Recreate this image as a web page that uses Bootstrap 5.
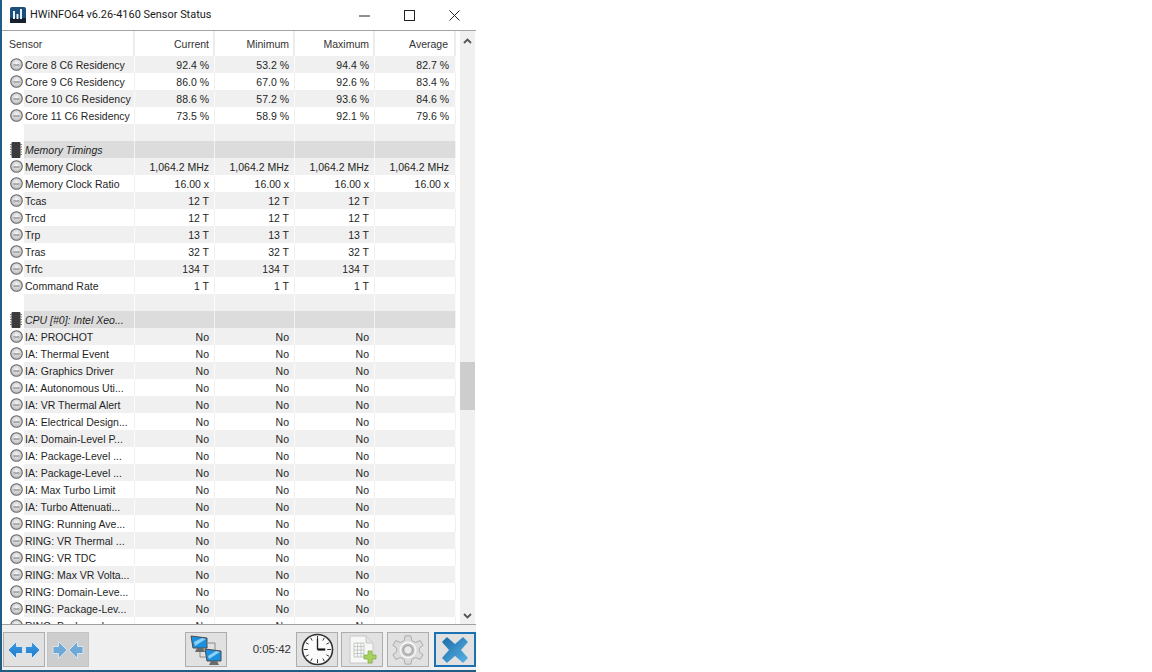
<!DOCTYPE html>
<html lang="en">
<head>
<meta charset="utf-8">
<title>HWiNFO64 v6.26-4160 Sensor Status</title>
<link href="https://cdn.jsdelivr.net/npm/bootstrap@5.3.0/dist/css/bootstrap.min.css" rel="stylesheet">
<style>
html,body{height:672px;margin:0;background:#fff;overflow:hidden}
body{font-family:"Liberation Sans",Arial,sans-serif;font-size:10.5px;color:#222}
.hw-window{width:476px;height:672px;border-left:2px solid #1f5d84;background:#fff}
.hw-title{height:30px;flex:none;padding-left:8px;margin-right:-1px;font-family:Roboto,"Liberation Sans",sans-serif;font-size:10.95px;color:#1a1a1a}
.hw-title-text{margin-left:4px;padding-top:1px}
.hw-ctl{width:45px;height:29px;padding:0;border:0;border-radius:0;background:transparent}
.hw-main{flex:1 1 0;min-height:0;border-top:1px solid #a4a4a4}
.hw-tablewrap{width:454px;flex:none;overflow:hidden}
.hw-table.table{width:454px;table-layout:fixed;margin:0;border-collapse:separate;border-spacing:0;--bs-table-bg:transparent;color:#222;font-size:10.5px}
.hw-table.table>:not(caption)>*>*{padding:0 5px 0 0;height:17px;line-height:16px;border:0;border-right:1px solid #f0f0f0;background:transparent;box-shadow:none;text-align:right;white-space:nowrap;color:#1f1f1f;vertical-align:middle}
.hw-table.table>thead>tr>th{height:25px;font-weight:400;border-right:2px solid #ececec;background:#fff;color:#333;padding-right:4px}
.hw-table.table>thead>tr>th.hw-c0{text-align:left;padding-left:7px}
.hw-table.table>tbody>tr>td.hw-ic{padding:0 0 0 8px;border:0;text-align:left;background:#fff!important;line-height:0}
.hw-table.table>tbody>tr>td.hw-nm{text-align:left;padding-left:1px;overflow:hidden}
.hw-table.table>tbody>tr:nth-child(odd)>td{background:#f0f0f0;border-right-color:#fbfbfb}
.hw-table.table>tbody>tr.hw-grp>td{background:#dcdcdc;border-right-color:#f2f2f2}
.hw-table.table>tbody>tr.hw-grp>td.hw-nm{font-style:italic}
.hw-table.table>:not(caption)>*>*.hw-last{padding-right:6px}
.hw-cic{width:13px;height:13px;display:block}
.hw-chip{width:12px;height:16px;display:block}
.hw-gap{width:4px;flex:none}
.hw-sb{width:15px;flex:none;background:#f0f0f0}
.hw-sbend{height:17px;flex:none;color:#606060}
.hw-sbtop{height:19px}
.hw-thumb{height:48px;flex:none;background:#cdcdcd;margin-top:312px}
.hw-foot{height:46px;flex:none;background:#f0f0f0;border-top:1px solid #a0a0a0;padding:7px 0 0 1px}
.hw-btn{width:42px;height:35px;padding:0;border:1px solid #adadad;border-radius:0;background:#e1e1e1;flex:none;line-height:0}
.hw-btn:disabled{opacity:1;background:#cdcdcd;border-color:#c4c4c4}
.hw-btn2{margin-left:2px}
.hw-btn3{margin-left:96px}
.hw-time{width:69px;flex:none;text-align:right;padding-right:5px;font-size:11.5px;line-height:34px;color:#333}
.hw-btn5{margin-left:3px}
.hw-btn6{margin-left:4px}
.hw-btn7{margin-left:5px;border:2px solid #1b72b4;width:42px}
.hw-strip{height:2px;flex:none;background:#1f5d84}
</style>
</head>
<body>
<svg width="0" height="0" class="position-absolute">
<defs>
<radialGradient id="gf" cx=".5" cy=".4" r=".6"><stop offset="0" stop-color="#f6f6f6"/><stop offset="1" stop-color="#b9b9b9"/></radialGradient>
<linearGradient id="gb" x1="0" y1="0" x2="0" y2="1"><stop offset="0" stop-color="#3f9ae2"/><stop offset="1" stop-color="#1f7ccc"/></linearGradient>
<linearGradient id="gx" x1="0" y1="0" x2="1" y2="1"><stop offset="0" stop-color="#1d6ea8"/><stop offset="1" stop-color="#57b0e4"/></linearGradient>
<symbol id="clk" viewBox="0 0 13 13"><circle cx="6.5" cy="6.5" r="5.8" fill="url(#gf)" stroke="#666" stroke-width="1.1"/><path d="M3.500 7h6" stroke="#666" stroke-width=".9"/></symbol>
<symbol id="chp" viewBox="0 0 12 16"><rect x="1.5" y="0" width="9" height="16" rx="1" fill="#3c3c3c"/><path d="M0 2.5h2M0 5h2M0 7.5h2M0 10h2M0 12.5h2M10 2.5h2M10 5h2M10 7.5h2M10 10h2M10 12.5h2" stroke="#777" stroke-width="1"/></symbol>
</defs>
</svg>
<div class="hw-window d-flex flex-column">
  <div class="hw-title d-flex align-items-center">
    <svg width="16" height="16" viewBox="0 0 16 16"><rect width="16" height="16" rx="2" fill="#1d4f78"/><rect y="11" width="16" height="5" fill="#15212c"/><path d="M3 4h2v8H3zM6.500 7h2v5h-2zM10 2h2v10h-2z" fill="#e8f2fa"/></svg>
    <span class="hw-title-text">HWiNFO64 v6.26-4160 Sensor Status</span>
    <div class="ms-auto d-flex">
      <button class="btn hw-ctl d-flex align-items-center justify-content-center" aria-label="Minimize"><svg width="11" height="11" viewBox="0 0 11 11"><path d="M0 6h11" stroke="#222"/></svg></button>
      <button class="btn hw-ctl d-flex align-items-center justify-content-center" aria-label="Maximize"><svg width="11" height="11" viewBox="0 0 11 11"><rect x=".5" y=".5" width="10" height="10" fill="none" stroke="#222"/></svg></button>
      <button class="btn hw-ctl d-flex align-items-center justify-content-center" aria-label="Close"><svg width="11" height="11" viewBox="0 0 11 11"><path d="M.5.5l10 10M10.500.5l-10 10" stroke="#222"/></svg></button>
    </div>
  </div>
  <div class="hw-main d-flex">
    <div class="hw-tablewrap">
      <table class="table hw-table">
        <colgroup><col style="width:22px"><col style="width:111px"><col style="width:80px"><col style="width:80px"><col style="width:80px"><col style="width:81px"></colgroup>
        <thead><tr><th class="hw-c0" colspan="2">Sensor</th><th>Current</th><th>Minimum</th><th>Maximum</th><th class="hw-last">Average</th></tr></thead>
        <tbody>
<tr><td class="hw-ic"><svg class="hw-cic"><use href="#clk"/></svg></td><td class="hw-nm">Core 8 C6 Residency</td><td>92.4 %</td><td>53.2 %</td><td>94.4 %</td><td class="hw-last">82.7 %</td></tr>
<tr><td class="hw-ic"><svg class="hw-cic"><use href="#clk"/></svg></td><td class="hw-nm">Core 9 C6 Residency</td><td>86.0 %</td><td>67.0 %</td><td>92.6 %</td><td class="hw-last">83.4 %</td></tr>
<tr><td class="hw-ic"><svg class="hw-cic"><use href="#clk"/></svg></td><td class="hw-nm">Core 10 C6 Residency</td><td>88.6 %</td><td>57.2 %</td><td>93.6 %</td><td class="hw-last">84.6 %</td></tr>
<tr><td class="hw-ic"><svg class="hw-cic"><use href="#clk"/></svg></td><td class="hw-nm">Core 11 C6 Residency</td><td>73.5 %</td><td>58.9 %</td><td>92.1 %</td><td class="hw-last">79.6 %</td></tr>
<tr><td class="hw-ic"></td><td class="hw-nm"></td><td></td><td></td><td></td><td></td></tr>
<tr class="hw-grp"><td class="hw-ic"><svg class="hw-chip"><use href="#chp"/></svg></td><td class="hw-nm">Memory Timings</td><td></td><td></td><td></td><td></td></tr>
<tr><td class="hw-ic"><svg class="hw-cic"><use href="#clk"/></svg></td><td class="hw-nm">Memory Clock</td><td>1,064.2 MHz</td><td>1,064.2 MHz</td><td>1,064.2 MHz</td><td class="hw-last">1,064.2 MHz</td></tr>
<tr><td class="hw-ic"><svg class="hw-cic"><use href="#clk"/></svg></td><td class="hw-nm">Memory Clock Ratio</td><td>16.00 x</td><td>16.00 x</td><td>16.00 x</td><td class="hw-last">16.00 x</td></tr>
<tr><td class="hw-ic"><svg class="hw-cic"><use href="#clk"/></svg></td><td class="hw-nm">Tcas</td><td>12 T</td><td>12 T</td><td>12 T</td><td></td></tr>
<tr><td class="hw-ic"><svg class="hw-cic"><use href="#clk"/></svg></td><td class="hw-nm">Trcd</td><td>12 T</td><td>12 T</td><td>12 T</td><td></td></tr>
<tr><td class="hw-ic"><svg class="hw-cic"><use href="#clk"/></svg></td><td class="hw-nm">Trp</td><td>13 T</td><td>13 T</td><td>13 T</td><td></td></tr>
<tr><td class="hw-ic"><svg class="hw-cic"><use href="#clk"/></svg></td><td class="hw-nm">Tras</td><td>32 T</td><td>32 T</td><td>32 T</td><td></td></tr>
<tr><td class="hw-ic"><svg class="hw-cic"><use href="#clk"/></svg></td><td class="hw-nm">Trfc</td><td>134 T</td><td>134 T</td><td>134 T</td><td></td></tr>
<tr><td class="hw-ic"><svg class="hw-cic"><use href="#clk"/></svg></td><td class="hw-nm">Command Rate</td><td>1 T</td><td>1 T</td><td>1 T</td><td></td></tr>
<tr><td class="hw-ic"></td><td class="hw-nm"></td><td></td><td></td><td></td><td></td></tr>
<tr class="hw-grp"><td class="hw-ic"><svg class="hw-chip"><use href="#chp"/></svg></td><td class="hw-nm">CPU [#0]: Intel Xeo...</td><td></td><td></td><td></td><td></td></tr>
<tr><td class="hw-ic"><svg class="hw-cic"><use href="#clk"/></svg></td><td class="hw-nm">IA: PROCHOT</td><td>No</td><td>No</td><td>No</td><td></td></tr>
<tr><td class="hw-ic"><svg class="hw-cic"><use href="#clk"/></svg></td><td class="hw-nm">IA: Thermal Event</td><td>No</td><td>No</td><td>No</td><td></td></tr>
<tr><td class="hw-ic"><svg class="hw-cic"><use href="#clk"/></svg></td><td class="hw-nm">IA: Graphics Driver</td><td>No</td><td>No</td><td>No</td><td></td></tr>
<tr><td class="hw-ic"><svg class="hw-cic"><use href="#clk"/></svg></td><td class="hw-nm">IA: Autonomous Uti...</td><td>No</td><td>No</td><td>No</td><td></td></tr>
<tr><td class="hw-ic"><svg class="hw-cic"><use href="#clk"/></svg></td><td class="hw-nm">IA: VR Thermal Alert</td><td>No</td><td>No</td><td>No</td><td></td></tr>
<tr><td class="hw-ic"><svg class="hw-cic"><use href="#clk"/></svg></td><td class="hw-nm">IA: Electrical Design...</td><td>No</td><td>No</td><td>No</td><td></td></tr>
<tr><td class="hw-ic"><svg class="hw-cic"><use href="#clk"/></svg></td><td class="hw-nm">IA: Domain-Level P...</td><td>No</td><td>No</td><td>No</td><td></td></tr>
<tr><td class="hw-ic"><svg class="hw-cic"><use href="#clk"/></svg></td><td class="hw-nm">IA: Package-Level ...</td><td>No</td><td>No</td><td>No</td><td></td></tr>
<tr><td class="hw-ic"><svg class="hw-cic"><use href="#clk"/></svg></td><td class="hw-nm">IA: Package-Level ...</td><td>No</td><td>No</td><td>No</td><td></td></tr>
<tr><td class="hw-ic"><svg class="hw-cic"><use href="#clk"/></svg></td><td class="hw-nm">IA: Max Turbo Limit</td><td>No</td><td>No</td><td>No</td><td></td></tr>
<tr><td class="hw-ic"><svg class="hw-cic"><use href="#clk"/></svg></td><td class="hw-nm">IA: Turbo Attenuati...</td><td>No</td><td>No</td><td>No</td><td></td></tr>
<tr><td class="hw-ic"><svg class="hw-cic"><use href="#clk"/></svg></td><td class="hw-nm">RING: Running Ave...</td><td>No</td><td>No</td><td>No</td><td></td></tr>
<tr><td class="hw-ic"><svg class="hw-cic"><use href="#clk"/></svg></td><td class="hw-nm">RING: VR Thermal ...</td><td>No</td><td>No</td><td>No</td><td></td></tr>
<tr><td class="hw-ic"><svg class="hw-cic"><use href="#clk"/></svg></td><td class="hw-nm">RING: VR TDC</td><td>No</td><td>No</td><td>No</td><td></td></tr>
<tr><td class="hw-ic"><svg class="hw-cic"><use href="#clk"/></svg></td><td class="hw-nm">RING: Max VR Volta...</td><td>No</td><td>No</td><td>No</td><td></td></tr>
<tr><td class="hw-ic"><svg class="hw-cic"><use href="#clk"/></svg></td><td class="hw-nm">RING: Domain-Leve...</td><td>No</td><td>No</td><td>No</td><td></td></tr>
<tr><td class="hw-ic"><svg class="hw-cic"><use href="#clk"/></svg></td><td class="hw-nm">RING: Package-Lev...</td><td>No</td><td>No</td><td>No</td><td></td></tr>
<tr><td class="hw-ic"><svg class="hw-cic"><use href="#clk"/></svg></td><td class="hw-nm">RING: Package-Lev...</td><td>No</td><td>No</td><td>No</td><td></td></tr>
        </tbody>
      </table>
    </div>
    <div class="hw-gap"></div>
    <div class="hw-sb d-flex flex-column">
      <div class="hw-sbend hw-sbtop d-flex align-items-center justify-content-center"><svg width="9" height="6" viewBox="0 0 9 6"><path d="M1 5l3.500-3.500L8 5" fill="none" stroke="#555" stroke-width="1.800"/></svg></div>
      <div class="hw-thumb"></div>
      <div class="flex-grow-1"></div>
      <div class="hw-sbend d-flex align-items-center justify-content-center"><svg width="9" height="6" viewBox="0 0 9 6"><path d="M1 1l3.500 3.500L8 1" fill="none" stroke="#555" stroke-width="1.800"/></svg></div>
    </div>
  </div>
  <div class="hw-foot d-flex align-items-start">
    <button class="btn hw-btn" aria-label="Expand"><svg width="32" height="18" viewBox="0 0 32 18"><path d="M0 9l8.500-8.500v5h6v7h-6v5z" fill="url(#gb)" stroke="#e6f3fb" stroke-width=".8"/><path d="M32 9l-8.500-8.500v5h-6v7h6v5z" fill="url(#gb)" stroke="#e6f3fb" stroke-width=".8"/></svg></button>
    <button class="btn hw-btn hw-btn2" disabled aria-label="Collapse"><svg width="32" height="18" viewBox="0 0 32 18"><path d="M15 9L6.500.5v5H1v7h5.500v5z" fill="#6fa9d9" stroke="#e3edf4" stroke-width=".8"/><path d="M17 9l8.500-8.500v5H31v7h-5.500v5z" fill="#6fa9d9" stroke="#e3edf4" stroke-width=".8"/></svg></button>
    <button class="btn hw-btn hw-btn3" aria-label="Network"><svg width="36" height="33" viewBox="0 0 36 33"><path d="M20 10h7v8M12 18v6h8" fill="none" stroke="#8a8a8a"/><path d="M3 3l16 2v10L5 15z" fill="#1b8fe0" stroke="#4a4a4a"/><path d="M6 9l8-4 4 1-11 7z" fill="#8fd0f5"/><path d="M9 15h6l2 4H7z" fill="#6a6a6a"/><path d="M17 16l16 2v10l-14 0z" fill="#1b8fe0" stroke="#4a4a4a"/><path d="M20 23l8-5 4 1-11 7z" fill="#8fd0f5"/><path d="M23 28h6l2 4H21z" fill="#6a6a6a"/></svg></button>
    <div class="hw-time">0:05:42</div>
    <button class="btn hw-btn" aria-label="Clock"><svg width="33" height="33" viewBox="0 0 34 34"><circle cx="17" cy="17" r="15.500" fill="#fbfbfb" stroke="#333" stroke-width="1.600"/><path d="M17 3v4M17 27v4M3 17h4M27 17h4M10 5l1.500 2.800M24 5l-1.500 2.800M5 10l2.800 1.500M29 10l-2.800 1.500M5 24l2.800-1.500M29 24l-2.800-1.500M10 29l1.500-2.800M24 29l-1.500-2.800" stroke="#333"/><path d="M17 17V6" stroke="#222" stroke-width="1.400"/><path d="M17 17h8" stroke="#111" stroke-width="2.200"/></svg></button>
    <button class="btn hw-btn hw-btn5" aria-label="Log"><svg width="36" height="32" viewBox="0 0 36 32"><path d="M6 2h16l7 7v20H6z" fill="#f7f7f7" stroke="#c8c8c8"/><path d="M22 2v7h7" fill="#e2e2e2" stroke="#c8c8c8"/><path d="M10 9h10v14H10zM10 12.500h10M10 16h10M10 19.500h10M13.500 9v14M17 9v14" fill="none" stroke="#b9c2b9" stroke-width=".8"/><path d="M24 17h4v4h4v4h-4v4h-4v-4h-4v-4h4z" fill="#a6d35f" stroke="#7fa840" stroke-width=".7"/></svg></button>
    <button class="btn hw-btn hw-btn6" aria-label="Settings"><svg width="34" height="32" viewBox="0 0 36 34"><path d="M15 2h6l1 5 4 2 5-2 3 5-4 3v4l4 3-3 5-5-2-4 2-1 5h-6l-1-5-4-2-5 2-3-5 4-3v-4l-4-3 3-5 5 2 4-2z" fill="#dcdcdc" stroke="#a8a8a8"/><circle cx="18" cy="17" r="8" fill="#bdbdbd" stroke="#f4f4f4" stroke-width="2"/><circle cx="18" cy="17" r="4.500" fill="#ececec" stroke="#999"/></svg></button>
    <button class="btn hw-btn hw-btn7" aria-label="Close sensors"><svg width="26" height="26" viewBox="0 0 26 26"><path d="M5 1l8 7 8-7 4 4-7 8 7 8-4 4-8-7-8 7-4-4 7-8-7-8z" fill="url(#gx)" stroke="url(#gx)" stroke-linejoin="round" stroke-width="1.500"/></svg></button>
  </div>
  <div class="hw-strip"></div>
</div>
</body>
</html>
